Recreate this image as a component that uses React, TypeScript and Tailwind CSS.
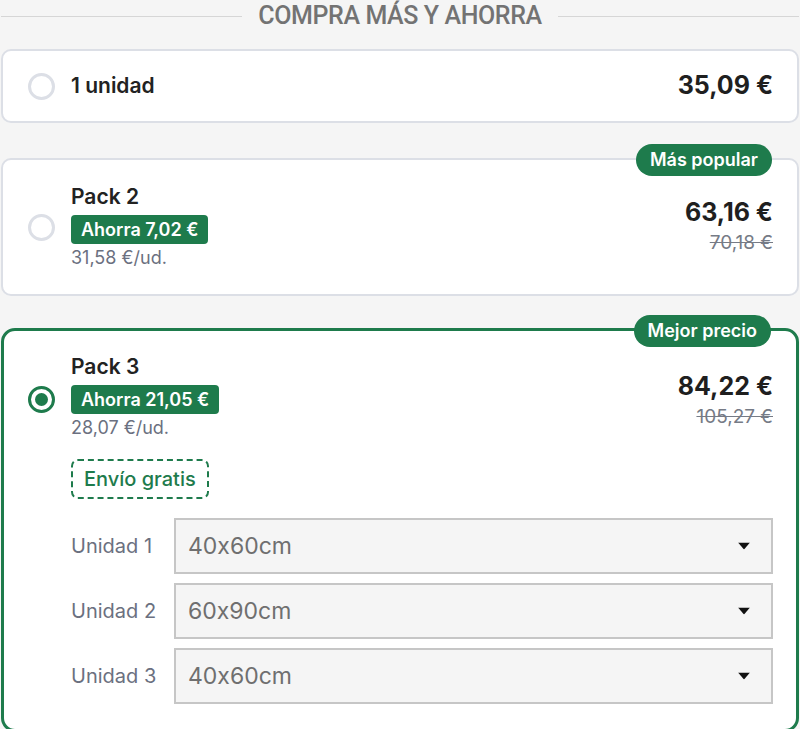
import { useState } from "react";

const GREEN = "bg-[#1e7b4c]";

function Radio({ checked }: { checked: boolean }) {
  return checked ? (
    <span className="flex h-[27px] w-[27px] shrink-0 items-center justify-center rounded-full border-[3px] border-[#1e7b4c]">
      <span className="h-[13px] w-[13px] rounded-full bg-[#1e7b4c]" />
    </span>
  ) : (
    <span className="h-[27px] w-[27px] shrink-0 rounded-full border-[3px] border-[#dcdfe6] bg-white" />
  );
}

function Tag({ children }: { children: string }) {
  return (
    <span className={`absolute -top-[16px] right-[25px] rounded-full ${GREEN} px-[14px] py-[5px] text-[18px] font-semibold leading-[22px] text-white`}>
      {children}
    </span>
  );
}

function Saving({ children }: { children: string }) {
  return (
    <span className={`inline-block rounded-[4px] ${GREEN} px-[10px] py-[2px] text-[18px] font-semibold leading-[25px] text-white`}>
      {children}
    </span>
  );
}

function Price({ now, was }: { now: string; was: string }) {
  return (
    <div className="flex flex-col items-end">
      <span className="text-[25px] font-bold leading-[34px] text-[#1f1f1f]">{now}</span>
      <span className="text-[19px] leading-[28px] text-[#767b86] line-through">{was}</span>
    </div>
  );
}

const sizes = ["40x60cm", "60x90cm"];

export default function App() {
  const [units, setUnits] = useState(["40x60cm", "60x90cm", "40x60cm"]);

  return (
    <div className="min-h-screen bg-[#f5f5f5] px-px font-['Inter',sans-serif]">
      <div className="flex items-center gap-4">
        <div className="h-px flex-1 bg-[#d6d6d6]" />
        <h2 className="font-['Roboto',sans-serif] text-[25px] font-medium leading-[32px] tracking-[-0.4px] text-[#737373]">
          COMPRA MÁS Y AHORRA
        </h2>
        <div className="h-px flex-1 bg-[#d6d6d6]" />
      </div>

      {/* 1 unidad */}
      <div className="mt-[17px] flex h-[74px] items-center rounded-[10px] border-2 border-[#dcdfe6] bg-white pl-[25px] pr-[24px]">
        <Radio checked={false} />
        <span className="ml-[16px] flex-1 text-[21px] font-semibold text-[#222]">1 unidad</span>
        <span className="text-[25px] font-bold text-[#1f1f1f]">35,09 €</span>
      </div>

      {/* Pack 2 */}
      <div className="relative mt-[35px] flex h-[138px] items-center rounded-[10px] border-2 border-[#dcdfe6] bg-white pl-[25px] pr-[24px]">
        <Tag>Más popular</Tag>
        <Radio checked={false} />
        <div className="ml-[16px] flex flex-1 flex-col items-start">
          <span className="text-[21px] font-semibold leading-[30px] text-[#222]">Pack 2</span>
          <span className="mt-[3px]">
            <Saving>Ahorra 7,02 €</Saving>
          </span>
          <span className="text-[18px] leading-[28px] text-[#6b7080]">31,58 €/ud.</span>
        </div>
        <div className="mb-[2px]">
          <Price now="63,16 €" was="70,18 €" />
        </div>
      </div>

      {/* Pack 3 */}
      <div className="relative mt-[32px] rounded-[14px] border-[3px] border-[#1e7b4c] bg-white pb-[25px] pl-[24px] pr-[23px] pt-[21px]">
        <Tag>Mejor precio</Tag>
        <div className="flex items-start">
          <span className="mt-[34px]">
            <Radio checked />
          </span>
          <div className="ml-[16px] flex flex-1 flex-col items-start">
            <span className="text-[21px] font-semibold leading-[30px] text-[#222]">Pack 3</span>
            <span className="mt-[3px]">
              <Saving>Ahorra 21,05 €</Saving>
            </span>
            <span className="text-[18px] leading-[28px] text-[#6b7080]">28,07 €/ud.</span>
            <span className="mt-[17px] rounded-[7px] border-2 border-dashed border-[#1e7b4c] px-[11px] py-[3px] text-[20px] font-medium leading-[30px] text-[#1e7b4c]">
              Envío gratis
            </span>
          </div>
          <div className="mt-[17px]">
            <Price now="84,22 €" was="105,27 €" />
          </div>
        </div>

        <div className="ml-[43px] mt-[19px] flex flex-col gap-[9px]">
          {units.map((u, i) => (
            <div key={i} className="flex items-center">
              <span className="w-[103px] text-[20px] text-[#6b7080]">Unidad {i + 1}</span>
              <div className="relative flex-1">
                <select
                  value={u}
                  onChange={(e) => setUnits(units.map((x, j) => (j === i ? e.target.value : x)))}
                  className="h-[56px] w-full appearance-none border-2 border-[#c6c6c6] bg-[#f5f5f5] pl-[12px] text-[23px] text-[#6f6f6f] outline-none [font-feature-settings:'calt'_0]"
                >
                  {sizes.map((s) => (
                    <option key={s}>{s}</option>
                  ))}
                </select>
                <svg className="pointer-events-none absolute right-[23px] top-1/2 -translate-y-1/2" width="12" height="7" viewBox="0 0 12 7">
                  <path d="M0 0h12L6 7z" fill="#111" />
                </svg>
              </div>
            </div>
          ))}
        </div>
      </div>
    </div>
  );
}
